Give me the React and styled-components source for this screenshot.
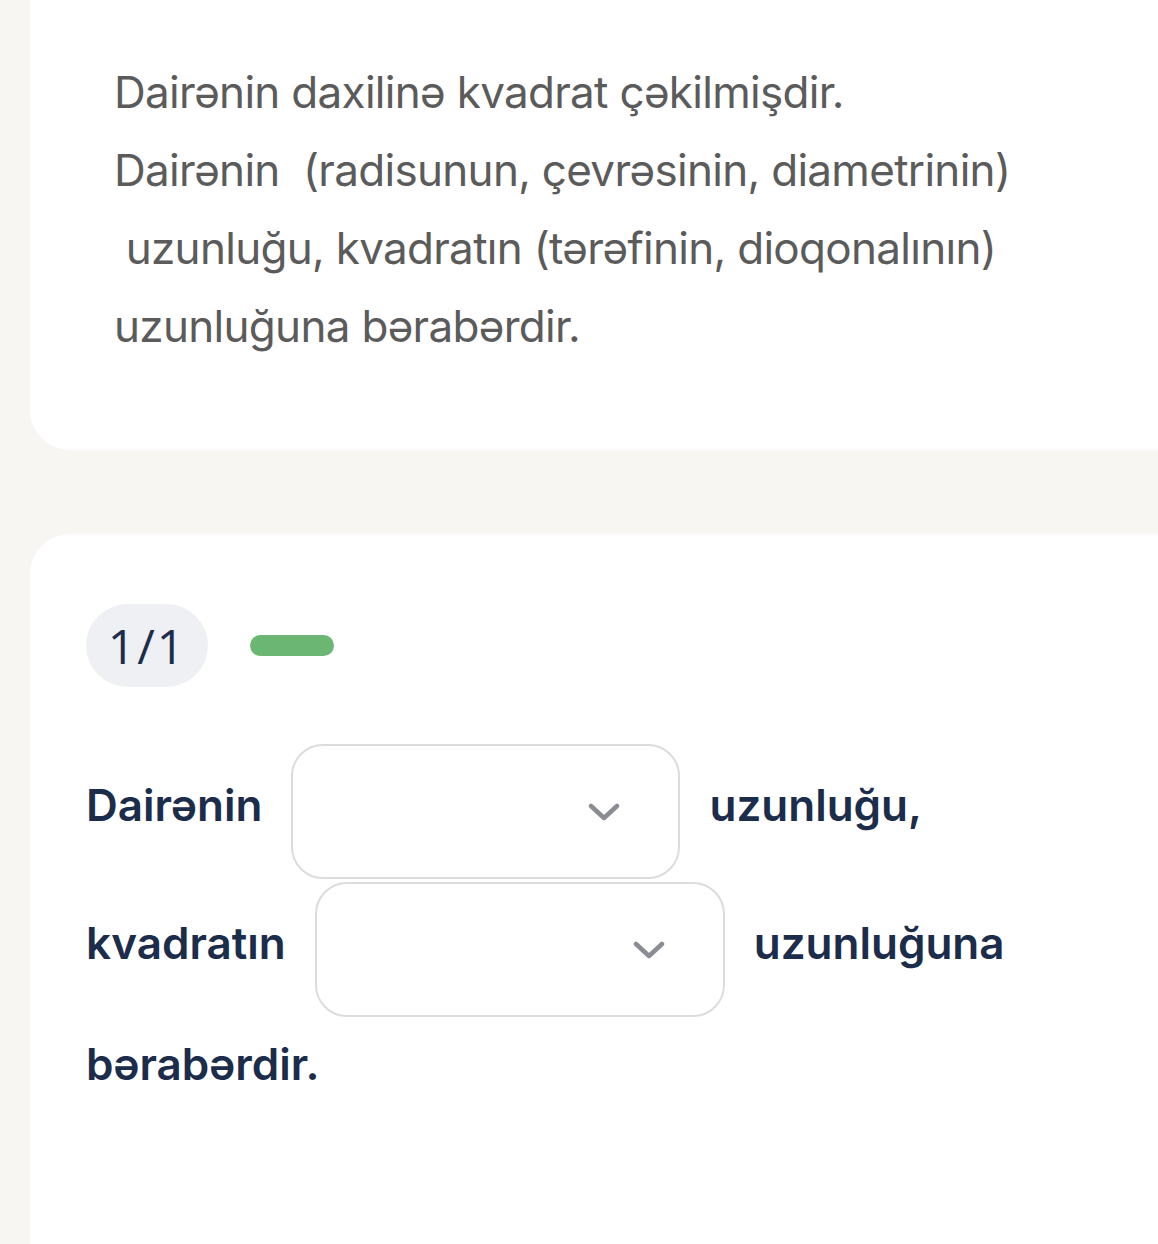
import React from 'react'
import styled, { createGlobalStyle } from 'styled-components'

const GlobalStyle = createGlobalStyle`
  html, body {
    margin: 0;
    padding: 0;
    background: #f7f6f3;
    overflow: hidden;
  }
  body {
    font-family: Inter, "Noto Sans", sans-serif;
  }
`

const Page = styled.div`
  display: flex;
  flex-direction: column;
  gap: 84px;
  padding-left: 30px;
  margin-right: -40px;
`

const Card = styled.div`
  background: #fff;
  border-radius: ${(p) => p.$radius};
  padding: ${(p) => p.$padding};
  min-height: ${(p) => p.$minHeight || 'auto'};
`

const Lead = styled.p`
  margin: 0;
  color: #5b5b5b;
  font-size: 44px;
  line-height: 78px;
  letter-spacing: -0.7px;
  white-space: pre-wrap;
`

const Header = styled.div`
  display: flex;
  align-items: center;
  gap: 42px;
  margin-bottom: 57px;
`

const Counter = styled.div`
  display: flex;
  align-items: center;
  justify-content: center;
  width: 122px;
  height: 83px;
  border-radius: 42px;
  background: #eef0f3;
  color: #1b2d4b;
  font-family: "Open Sans", sans-serif;
  font-size: 48px;
  letter-spacing: 2px;
`

const Progress = styled.div`
  width: 84px;
  height: 21px;
  border-radius: 11px;
  background: #6bb673;
`

const Sentence = styled.div`
  display: flex;
  flex-wrap: wrap;
  align-items: center;
  column-gap: 29px;
  row-gap: 3px;
  max-width: 1046px;
`

const Word = styled.span`
  color: #1b2d4b;
  font-size: 44px;
  font-weight: 600;
  line-height: 80px;
  margin-top: ${(p) => p.$offset || 0}px;
`

const Select = styled.div`
  box-sizing: border-box;
  display: flex;
  align-items: center;
  justify-content: flex-end;
  width: ${(p) => p.$width}px;
  height: 135px;
  padding-right: 58px;
  border: 2px solid #dcdcdc;
  border-radius: 32px;
  background: #fff;
`

const Chevron = () => (
  <svg width="32" height="20" viewBox="0 0 32 20" fill="none">
    <path d="M3 4l13 12L29 4" stroke="#8a8d94" strokeWidth="4.5" strokeLinecap="round" strokeLinejoin="round" />
  </svg>
)

const App = () => {
  return (
    <>
      <GlobalStyle />
      <Page>
        <Card $radius="0 0 40px 40px" $padding="53px 84px 85px">
          <Lead>
            {'Dairənin daxilinə kvadrat çəkilmişdir.\nDairənin  (radisunun, çevrəsinin, diametrinin)\n uzunluğu, kvadratın (tərəfinin, dioqonalının)\nuzunluğuna bərabərdir.'}
          </Lead>
        </Card>
        <Card $radius="40px 40px 0 0" $padding="70px 56px" $minHeight="800px">
          <Header>
            <Counter>1/1</Counter>
            <Progress />
          </Header>
          <Sentence>
            <Word $offset={-14}>Dairənin</Word>
            <Select $width={389}>
              <Chevron />
            </Select>
            <Word $offset={-14}>uzunluğu,</Word>
            <Word $offset={-14}>kvadratın</Word>
            <Select $width={410}>
              <Chevron />
            </Select>
            <Word $offset={-14}>uzunluğuna</Word>
            <Word $offset={4}>bərabərdir.</Word>
          </Sentence>
        </Card>
      </Page>
    </>
  )
}

export default App
